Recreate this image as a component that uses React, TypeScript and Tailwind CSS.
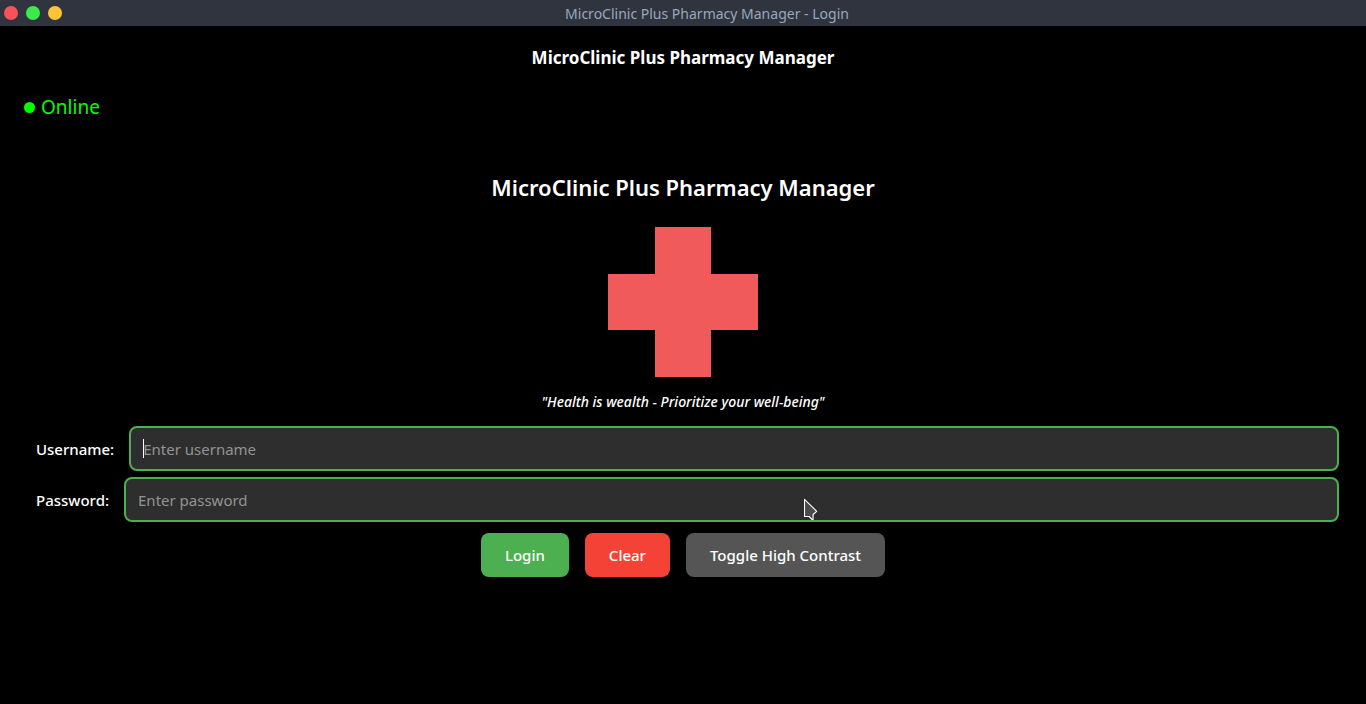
import type { ButtonHTMLAttributes, InputHTMLAttributes } from "react";
import { useState } from "react";

const APP_NAME = "MicroClinic Plus Pharmacy Manager";

function TitleBar() {
  return (
    <header className="flex h-[26px] items-center bg-[#30343f] pl-1">
      <div className="flex gap-2">
        <button type="button" aria-label="Close" className="size-[14px] rounded-full bg-[#f8515a]" />
        <button type="button" aria-label="Maximize" className="size-[14px] rounded-full bg-[#3ceb49]" />
        <button type="button" aria-label="Minimize" className="size-[14px] rounded-full bg-[#fdc536]" />
      </div>
      <span className="flex-1 pt-[2px] pr-[14px] text-center text-sm font-normal text-[#9aa7bd]">{APP_NAME} - Login</span>
    </header>
  );
}

type FieldProps = InputHTMLAttributes<HTMLInputElement> & { id: string; label: string; caret?: boolean };

function Field({ id, label, caret, ...input }: FieldProps) {
  return (
    <div className="flex items-center gap-[15px]">
      <label htmlFor={id} className="pt-[2px] text-[15px] font-medium text-white">
        {label}
      </label>
      <div className="relative flex-1">
        <input
          id={id}
          className="block h-[45px] w-full rounded-lg border-2 border-[#4caf50] bg-[#2e2e2e] px-3 text-[15px] text-white outline-none placeholder:text-[#939393]"
          {...input}
        />
        {caret && <span className="absolute top-[13px] left-[14px] h-[19px] w-px bg-white" />}
      </div>
    </div>
  );
}

function ActionButton({ className, ...props }: ButtonHTMLAttributes<HTMLButtonElement>) {
  return <button className={`h-11 rounded-lg px-6 text-[15px] font-medium text-white ${className}`} {...props} />;
}

function Pointer() {
  return (
    <svg className="pointer-events-none absolute top-[498px] left-[804px]" width="14" height="23" viewBox="0 0 14 23" aria-hidden="true">
      <path d="M.5 1.3v17.2h4.6l3 3h1v-5l3.6-3.2z" fill="#4b4b4b" stroke="#fff" strokeWidth="1.1" strokeLinejoin="round" />
    </svg>
  );
}

export default function App() {
  const [username, setUsername] = useState("");
  const [password, setPassword] = useState("");

  return (
    <div className="relative min-h-screen bg-black font-['Noto_Sans',sans-serif] text-white">
      <TitleBar />
      <main className="px-6">
        <h1 className="pt-[18px] text-center text-[17px] leading-7 font-bold">{APP_NAME}</h1>
        <p className="mt-[21px] flex items-center gap-[6px] text-[19px] leading-7 text-[#00ff00]">
          <span className="size-[11px] rounded-full bg-[#00ff00]" />
          Online
        </p>
        <section className="mt-[50px] flex flex-col items-center">
          <h2 className="text-[22px] leading-8 font-semibold">{APP_NAME}</h2>
          <svg className="mt-6" width="150" height="150" viewBox="0 0 150 150" role="img" aria-label="Red cross">
            <path d="M47 0h56v47h47v56h-47v47H47v-47H0V47h47z" fill="#f05a5b" />
          </svg>
          <p className="mt-[15px] text-sm leading-5 font-medium italic">"Health is wealth - Prioritize your well-being"</p>
        </section>
        <form className="mt-[14px] pr-[3px] pl-3" onSubmit={(e) => e.preventDefault()}>
          <div className="flex flex-col gap-[6px]">
            <Field
              id="username"
              label="Username:"
              placeholder="Enter username"
              autoComplete="username"
              value={username}
              onChange={(e) => setUsername(e.target.value)}
              caret={username === ""}
            />
            <Field
              id="password"
              label="Password:"
              type="password"
              placeholder="Enter password"
              autoComplete="current-password"
              value={password}
              onChange={(e) => setPassword(e.target.value)}
            />
          </div>
          <div className="mt-[11px] -ml-[9px] flex justify-center gap-4">
            <ActionButton type="submit" className="bg-[#4caf50]">
              Login
            </ActionButton>
            <ActionButton
              type="button"
              className="bg-[#f44336]"
              onClick={() => {
                setUsername("");
                setPassword("");
              }}
            >
              Clear
            </ActionButton>
            <ActionButton type="button" className="bg-[#555555]">
              Toggle High Contrast
            </ActionButton>
          </div>
        </form>
      </main>
      <Pointer />
    </div>
  );
}
